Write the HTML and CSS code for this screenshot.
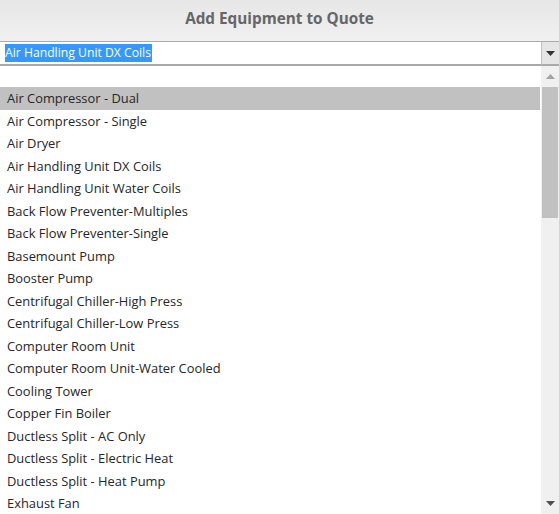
FILE: index.html
```html
<!DOCTYPE html>
<html>
<head>
<meta charset="utf-8">
<link rel="stylesheet" href="styles.css">
</head>
<body>
<div class="header">Add Equipment to Quote</div>
<div class="combo">
  <div class="field"><span class="sel">Air Handling Unit DX Coils</span></div>
  <div class="btn"><svg width="9" height="5" viewBox="0 0 9 5"><path d="M0 0H9L4.5 5Z" fill="#333"/></svg></div>
</div>
<div class="list">
  <div class="items">
    <div class="row blank"></div>
    <div class="row active">Air Compressor - Dual</div>
    <div class="row">Air Compressor - Single</div>
    <div class="row">Air Dryer</div>
    <div class="row">Air Handling Unit DX Coils</div>
    <div class="row">Air Handling Unit Water Coils</div>
    <div class="row">Back Flow Preventer-Multiples</div>
    <div class="row">Back Flow Preventer-Single</div>
    <div class="row">Basemount Pump</div>
    <div class="row">Booster Pump</div>
    <div class="row">Centrifugal Chiller-High Press</div>
    <div class="row">Centrifugal Chiller-Low Press</div>
    <div class="row">Computer Room Unit</div>
    <div class="row">Computer Room Unit-Water Cooled</div>
    <div class="row">Cooling Tower</div>
    <div class="row">Copper Fin Boiler</div>
    <div class="row">Ductless Split - AC Only</div>
    <div class="row">Ductless Split - Electric Heat</div>
    <div class="row">Ductless Split - Heat Pump</div>
    <div class="row">Exhaust Fan</div>
  </div>
  <div class="scrollbar">
    <div class="arrow"><svg width="9" height="5" viewBox="0 0 9 5"><path d="M0 5H9L4.5 0Z" fill="#a3a3a3"/></svg></div>
    <div class="thumb"></div>
    <div class="track"></div>
    <div class="arrow"><svg width="9" height="5" viewBox="0 0 9 5"><path d="M0 0H9L4.5 5Z" fill="#505050"/></svg></div>
  </div>
</div>
</body>
</html>
```
FILE: styles.css
```css
html, body {
  margin: 0;
  padding: 0;
  height: 514px;
  overflow: hidden;
}
body {
  font-family: "Open Sans", "Noto Sans", sans-serif;
  background: #fff;
}
.header {
  height: 41px;
  background: linear-gradient(#e6e6e6, #f1f1f1);
  color: #666;
  font-weight: bold;
  font-size: 15.3px;
  text-align: center;
  line-height: 36px;
}
.combo {
  display: flex;
  height: 25px;
  background: #f1f1f1;
}
.field {
  flex: 1;
  background: #fff;
  border-top: 1px solid #a9a9a9;
  border-bottom: 2px solid #a9a9a9;
  display: flex;
  align-items: center;
  padding-left: 5px;
}
.sel {
  background: #3399ff;
  color: #fff;
  font-size: 12.2px;
  line-height: 18px;
  padding-right: 1px;
}
.btn {
  width: 17px;
  background: #e5e5e5;
  border-left: 1px solid #c0c0c0;
  border-top: 1px solid #a9a9a9;
  border-bottom: 2px solid #a9a9a9;
  display: flex;
  align-items: center;
  justify-content: center;
}
.list {
  display: flex;
  height: 448px;
}
.items {
  flex: 1;
}
.row {
  box-sizing: border-box;
  height: 22.5px;
  padding-top: 1px;
  line-height: 21.5px;
  padding-left: 7px;
  font-size: 12.9px;
  color: #262626;
  white-space: nowrap;
}
.row.blank {
  height: 21px;
}
.row.active {
  background: #c1c1c1;
  margin-right: 1px;
}
.scrollbar {
  width: 18px;
  background: #f0f0f0;
  display: flex;
  flex-direction: column;
  align-items: center;
}
.arrow {
  height: 21px;
  display: flex;
  align-items: center;
  justify-content: center;
  width: 100%;
}
.thumb {
  width: 16px;
  height: 131px;
  background: #c1c1c1;
}
.track {
  flex: 1;
}
```
